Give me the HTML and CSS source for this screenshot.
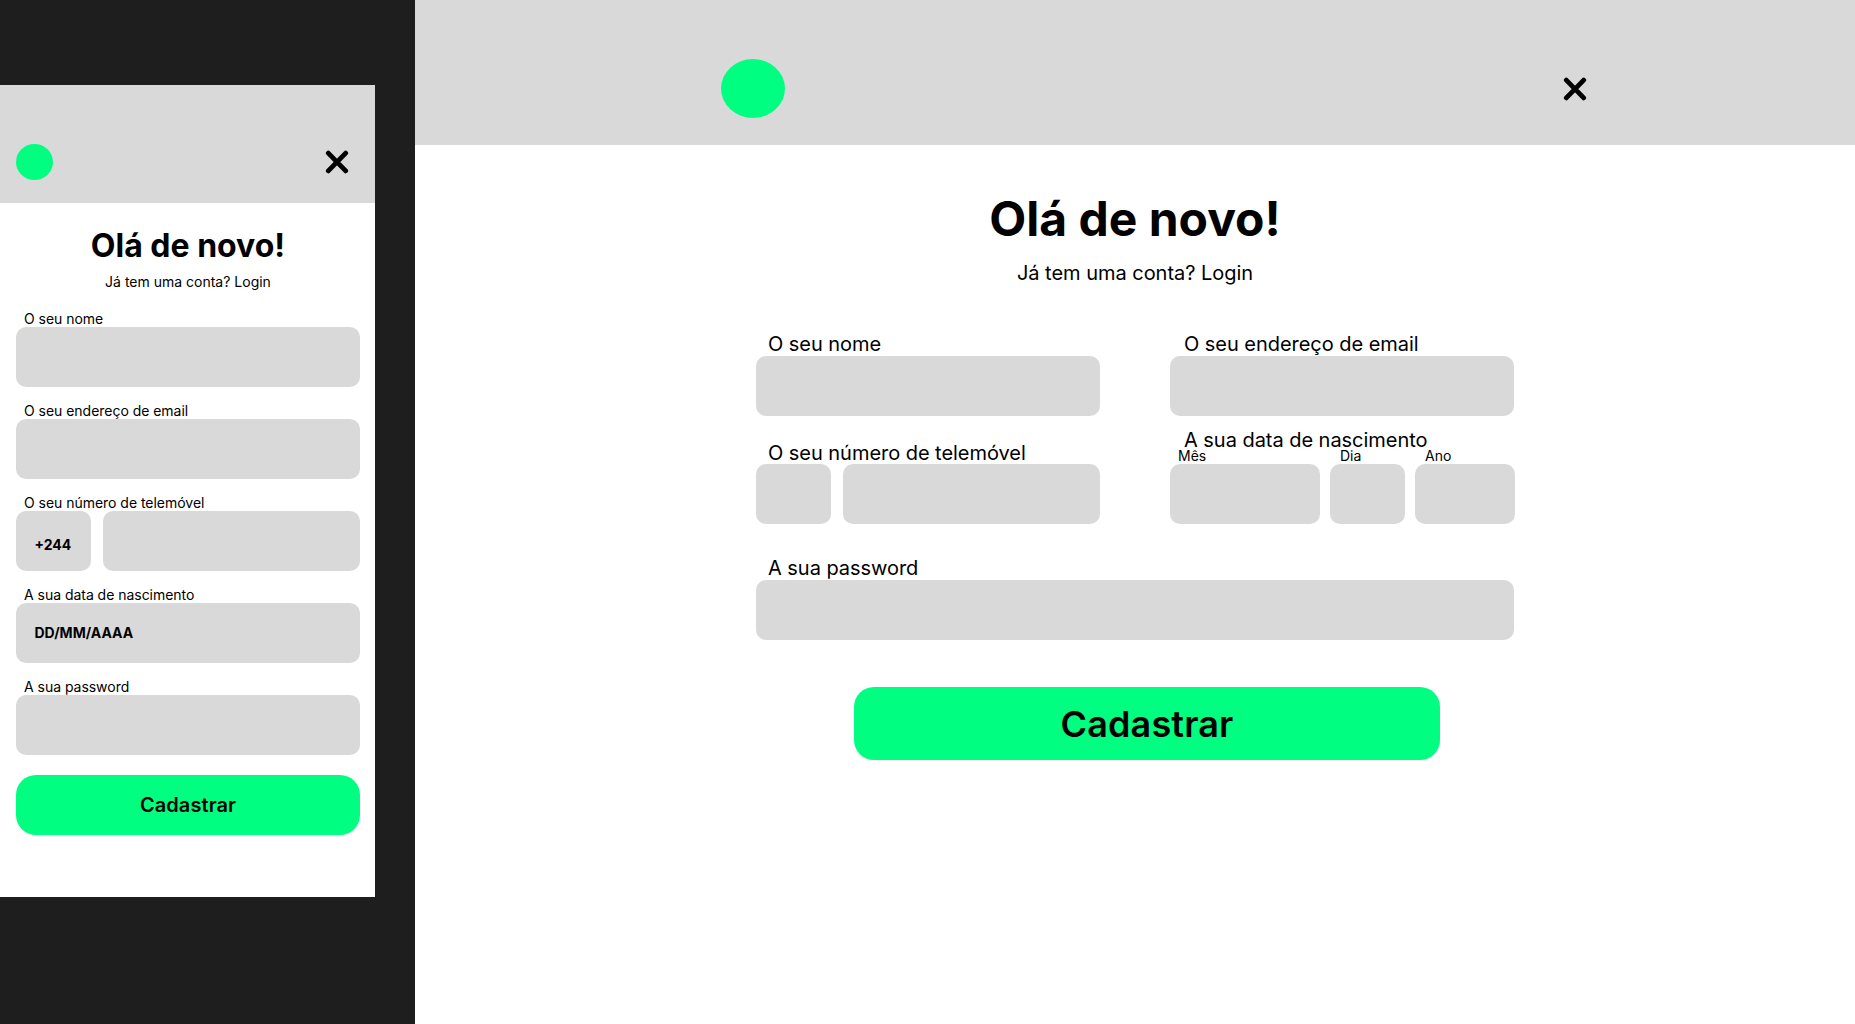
FILE: index.html
```html
<!DOCTYPE html>
<html lang="pt">
<head>
<meta charset="utf-8">
<title>Cadastrar</title>
<link rel="stylesheet" href="styles.css">
</head>
<body>
<main class="canvas">
  <section class="mobile">
    <header class="mobile-header">
      <div class="mobile-logo"></div>
      <svg class="close" viewBox="0 0 24 24"><path d="M3.3 3.1 20.7 20.9M20.7 3.1 3.3 20.9"/></svg>
    </header>
    <div class="mobile-body">
      <h1 class="mobile-title">Olá de novo!</h1>
      <p class="mobile-subtitle">Já tem uma conta? Login</p>
      <div class="mobile-form">
        <div><div class="small-label">O seu nome</div><div class="box"></div></div>
        <div><div class="small-label">O seu endereço de email</div><div class="box"></div></div>
        <div>
          <div class="small-label">O seu número de telemóvel</div>
          <div class="phone-row"><div class="box box-code value-code">+244</div><div class="box box-grow"></div></div>
        </div>
        <div><div class="small-label">A sua data de nascimento</div><div class="box value-date">DD/MM/AAAA</div></div>
        <div><div class="small-label">A sua password</div><div class="box"></div></div>
      </div>
      <button class="submit mobile-submit">Cadastrar</button>
    </div>
  </section>
  <section class="desktop">
    <header class="desktop-header">
      <div class="desktop-logo"></div>
      <svg class="close" viewBox="0 0 24 24"><path d="M3.3 3.1 20.7 20.9M20.7 3.1 3.3 20.9"/></svg>
    </header>
    <h1 class="desktop-title">Olá de novo!</h1>
    <p class="desktop-subtitle">Já tem uma conta? Login</p>
    <div class="desktop-form">
      <div><div class="label">O seu nome</div><div class="box"></div></div>
      <div><div class="label label-right">O seu endereço de email</div><div class="box"></div></div>
      <div class="phone-field">
        <div class="label">O seu número de telemóvel</div>
        <div class="phone-row"><div class="box box-code"></div><div class="box box-grow"></div></div>
      </div>
      <div class="birth-field">
        <div class="label label-right">A sua data de nascimento</div>
        <div class="birth-row">
          <div><div class="part-label part-month">Mês</div><div class="box"></div></div>
          <div><div class="part-label part-day">Dia</div><div class="box"></div></div>
          <div><div class="part-label part-year">Ano</div><div class="box"></div></div>
        </div>
      </div>
      <div class="password-field"><div class="label">A sua password</div><div class="box"></div></div>
    </div>
    <button class="submit desktop-submit">Cadastrar</button>
  </section>
</main>
</body>
</html>
```
FILE: styles.css
```css
* { box-sizing: border-box; }

body {
  margin: 0;
  background: #1e1e1e;
  color: #000;
  font-family: Inter, sans-serif;
}

h1, p { margin: 0; }

.canvas {
  display: flex;
  align-items: flex-start;
  gap: 40px;
  width: 1855px;
  height: 1024px;
  overflow: hidden;
}

.close {
  width: 24px;
  height: 24px;
  fill: none;
  stroke: #000;
  stroke-width: 4.8;
  stroke-linecap: round;
}

.box {
  height: 60px;
  border-radius: 10px;
  background: #d9d9d9;
}

.phone-row { display: flex; gap: 12px; }
.box-code { width: 75px; }
.box-grow { flex: 1; }

.submit {
  display: block;
  padding: 0;
  border: 0;
  border-radius: 20px;
  background: #00ff81;
  color: #000;
  font-family: inherit;
  font-weight: 600;
}

/* Mobile screen */
.mobile {
  flex: none;
  width: 375px;
  height: 812px;
  margin-top: 85px;
  background: #fff;
}

.mobile-header {
  display: flex;
  align-items: flex-end;
  justify-content: space-between;
  height: 118px;
  padding: 0 26px 23px 16px;
  background: #d9d9d9;
}

.mobile-header .close { margin-bottom: 6px; }

.mobile-logo {
  width: 37px;
  height: 36px;
  border-radius: 50%;
  background: #00ff81;
}

.mobile-body { padding: 23px 15px 0 16px; }

.mobile-title {
  font-size: 32px;
  line-height: 39px;
  text-align: center;
}

.mobile-subtitle {
  margin-top: 8px;
  font-size: 14px;
  line-height: 17px;
  text-align: center;
}

.mobile-form {
  display: flex;
  flex-direction: column;
  gap: 15px;
  margin-top: 20px;
}

.small-label {
  padding-left: 8px;
  font-size: 14px;
  line-height: 17px;
  letter-spacing: -0.03px;
}

.value-code, .value-date {
  font-size: 14px;
  font-weight: 700;
  line-height: 17px;
}

.value-code { padding: 25px 0 0 18.5px; }
.value-date { padding: 21px 0 0 18.5px; }

.mobile-submit {
  width: 100%;
  height: 60px;
  margin-top: 20px;
  font-size: 20px;
  letter-spacing: 0.08px;
}

/* Desktop screen */
.desktop {
  flex: none;
  width: 1440px;
  height: 1024px;
  background: #fff;
}

.desktop-header {
  display: flex;
  align-items: center;
  justify-content: space-between;
  height: 145px;
  padding: 32px 268px 0 306px;
  background: #d9d9d9;
}

.desktop-logo {
  width: 64px;
  height: 59px;
  border-radius: 50%;
  background: #00ff81;
}

.desktop-title {
  margin-top: 45px;
  font-size: 48px;
  line-height: 58px;
  text-align: center;
}

.desktop-subtitle {
  margin-top: 13px;
  font-size: 20px;
  line-height: 24px;
  letter-spacing: -0.03px;
  text-align: center;
}

.desktop-form {
  display: grid;
  grid-template-columns: 344px 344px;
  column-gap: 70px;
  width: 758px;
  margin: 47px 0 0 341px;
}

.label {
  padding-left: 12px;
  font-size: 20px;
  line-height: 24px;
  letter-spacing: -0.04px;
}

.label-right { padding-left: 14px; }

.phone-field { padding-top: 25px; }
.phone-field .label { margin-bottom: -1px; }
.birth-field { padding-top: 12px; }

.birth-row {
  display: grid;
  grid-template-columns: 150px 75px 100px;
  gap: 10px;
  width: 345px;
  margin-top: -5px;
}

.part-label {
  font-size: 14px;
  line-height: 17px;
}

.part-month { padding-left: 8px; }
.part-day { padding-left: 10px; }
.part-year { padding-left: 10px; }

.password-field {
  grid-column: 1 / -1;
  padding-top: 32px;
}

.desktop-submit {
  width: 586px;
  height: 73px;
  margin: 47px 0 0 439px;
  font-size: 36px;
  letter-spacing: 0.15px;
}
```
